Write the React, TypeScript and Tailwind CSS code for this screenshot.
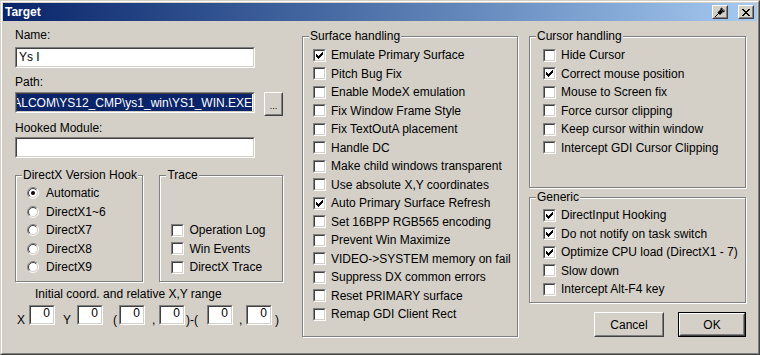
import React from "react";

function Sunken({ className = "", children }: { className?: string; children?: React.ReactNode }) {
  return (
    <div className={"border border-t-[#808080] border-l-[#808080] border-b-white border-r-white " + className}>
      <div className="h-full w-full border border-t-[#404040] border-l-[#404040] border-b-[#d4d0c8] border-r-[#d4d0c8] bg-white overflow-hidden">
        {children}
      </div>
    </div>
  );
}

function Raised({ className = "", children }: { className?: string; children?: React.ReactNode }) {
  return (
    <div className={"border border-t-white border-l-white border-b-[#404040] border-r-[#404040] " + className}>
      <div className="h-full w-full border border-t-[#d4d0c8] border-l-[#d4d0c8] border-b-[#808080] border-r-[#808080] flex items-center justify-center">
        {children}
      </div>
    </div>
  );
}

function CheckBox({ checked }: { checked?: boolean }) {
  return (
    <div className="w-[13px] h-[13px] shrink-0 border border-t-[#808080] border-l-[#808080] border-b-white border-r-white">
      <div className="relative h-full w-full border border-t-[#404040] border-l-[#404040] border-b-[#d4d0c8] border-r-[#d4d0c8] bg-white">
        {checked && (
          <svg width="7" height="7" viewBox="0 0 7 7" className="absolute left-[1px] top-[1px]">
            <path
              d="M0 2h1v3H0z M1 3h1v3H1z M2 4h1v3H2z M3 3h1v3H3z M4 2h1v3H4z M5 1h1v3H5z M6 0h1v3H6z"
              fill="#000"
            />
          </svg>
        )}
      </div>
    </div>
  );
}

function Radio({ checked }: { checked?: boolean }) {
  return (
    <svg width="12" height="12" viewBox="0 0 12 12" className="shrink-0">
      <circle cx="6" cy="6" r="4.5" fill="#fff" />
      <path d="M2.111 9.889 A5.5 5.5 0 0 1 9.889 2.111" stroke="#808080" fill="none" />
      <path d="M9.889 2.111 A5.5 5.5 0 0 1 2.111 9.889" stroke="#ffffff" fill="none" />
      <path d="M2.818 9.182 A4.5 4.5 0 0 1 9.182 2.818" stroke="#404040" fill="none" />
      <path d="M9.182 2.818 A4.5 4.5 0 0 1 2.818 9.182" stroke="#d4d0c8" fill="none" />
      {checked && <circle cx="6" cy="6" r="2" fill="#000" />}
    </svg>
  );
}

function CheckRow({ label, checked }: { label: string; checked?: boolean }) {
  return (
    <div className="flex items-center h-[18.5px]">
      <CheckBox checked={checked} />
      <span className="ml-[5px] leading-[14px] whitespace-nowrap">{label}</span>
    </div>
  );
}

function RadioRow({ label, checked }: { label: string; checked?: boolean }) {
  return (
    <div className="flex items-center h-[18.5px]">
      <Radio checked={checked} />
      <span className="ml-[7px] leading-[14px] whitespace-nowrap">{label}</span>
    </div>
  );
}

function Group({ title, className = "", children }: { title: string; className?: string; children?: React.ReactNode }) {
  return (
    <div className={"relative border border-[#808080] shadow-[inset_1px_1px_0_#fff,1px_1px_0_#fff] " + className}>
      <span className="absolute left-[6px] top-[-8px] bg-[#d4d0c8] px-[1px] leading-[14px] whitespace-nowrap">{title}</span>
      {children}
    </div>
  );
}

function CoordBox() {
  return (
    <Sunken className="w-[26px] h-[20px] self-start">
      <div className="text-right pr-[3px] leading-[13px]">0</div>
    </Sunken>
  );
}

function Lbl({ className = "", children }: { className?: string; children: React.ReactNode }) {
  return <span className={"leading-[14px] self-end whitespace-nowrap " + className}>{children}</span>;
}

export default function App() {
  const surface: [string, boolean][] = [
    ["Emulate Primary Surface", true],
    ["Pitch Bug Fix", false],
    ["Enable ModeX emulation", false],
    ["Fix Window Frame Style", false],
    ["Fix TextOutA placement", false],
    ["Handle DC", false],
    ["Make child windows transparent", false],
    ["Use absolute X,Y coordinates", false],
    ["Auto Primary Surface Refresh", true],
    ["Set 16BPP RGB565 encoding", false],
    ["Prevent Win Maximize", false],
    ["VIDEO->SYSTEM memory on fail", false],
    ["Suppress DX common errors", false],
    ["Reset PRIMARY surface", false],
    ["Remap GDI Client Rect", false],
  ];
  const cursor: [string, boolean][] = [
    ["Hide Cursor", false],
    ["Correct mouse position", true],
    ["Mouse to Screen fix", false],
    ["Force cursor clipping", false],
    ["Keep cursor within window", false],
    ["Intercept GDI Cursor Clipping", false],
  ];
  const generic: [string, boolean][] = [
    ["DirectInput Hooking", true],
    ["Do not notify on task switch", true],
    ["Optimize CPU load (DirectX1 - 7)", true],
    ["Slow down", false],
    ["Intercept Alt-F4 key", false],
  ];

  return (
    <div className="w-[760px] h-[355px] overflow-hidden bg-[#d4d0c8] font-['Liberation_Sans',Arial,sans-serif] text-[12px] text-black border border-t-[#d4d0c8] border-l-[#d4d0c8] border-b-[#404040] border-r-[#404040]">
      <div className="h-full border border-t-white border-l-white border-b-[#808080] border-r-[#808080] p-[1px] flex flex-col">
        {/* Title bar */}
        <div className="h-[18px] shrink-0 flex items-center bg-linear-to-r from-[#0a246a] to-[#a6caf0]">
          <span className="pl-[2px] font-bold text-white leading-[14px]">Target</span>
          <Raised className="ml-auto w-[16px] h-[14px] bg-[#d4d0c8]">
            <svg width="12" height="11" viewBox="0 0 12 11">
              <path d="M1 10 L5 6" stroke="#000" strokeWidth="1" />
              <path d="M3.5 5.5 L6.5 2.5 L9 5 L6 8 Z" fill="#000" />
              <path d="M6 2 L7.5 0.5 L11 4 L9.5 5.5 Z" fill="#000" />
              <path d="M7.6 1.6 L9.9 3.9" stroke="#9a9a9a" strokeWidth="0.8" />
            </svg>
          </Raised>
          <Raised className="ml-[10px] mr-[3px] w-[16px] h-[14px] bg-[#d4d0c8]">
            <svg width="8" height="7" viewBox="0 0 8 7">
              <path
                d="M0 0h2v1H0z M6 0h2v1H6z M1 1h2v1H1z M5 1h2v1H5z M2 2h4v1H2z M3 3h2v1H3z M2 4h4v1H2z M1 5h2v1H1z M5 5h2v1H5z M0 6h2v1H0z M6 6h2v1H6z"
                fill="#000"
              />
            </svg>
          </Raised>
        </div>

        {/* Body */}
        <div className="flex pl-[12px]">
          {/* Left column */}
          <div className="w-[268px] flex flex-col">
            <div className="mt-[7px] leading-[14px]">Name:</div>
            <Sunken className="mt-[5px] w-[240px] h-[21px]">
              <div className="pl-[2px] leading-[17px]">Ys I</div>
            </Sunken>
            <div className="mt-[7px] leading-[14px]">Path:</div>
            <div className="mt-[3px] flex items-start">
              <Sunken className="w-[240px] h-[21px]">
                <div className="h-full flex justify-end overflow-hidden pr-[1px]">
                  <span className="h-full flex items-center bg-[#0a246a] text-white whitespace-nowrap leading-[14px]">
                    {"C:\\Games\\FALCOM\\YS12_CMP\\ys1_win\\YS1_WIN.EXE"}
                  </span>
                </div>
              </Sunken>
              <Raised className="ml-[9px] w-[19px] h-[24px] bg-[#d4d0c8]">
                <span className="text-[9px] leading-[9px] mt-[5px]">...</span>
              </Raised>
            </div>
            <div className="mt-[5px] leading-[14px]">Hooked Module:</div>
            <Sunken className="mt-[2px] w-[240px] h-[21px]" />

            <div className="mt-[17px] flex">
              <Group title="DirectX Version Hook" className="w-[129px] h-[107px]">
                <div className="pt-[8px] pl-[11px]">
                  <RadioRow label="Automatic" checked />
                  <RadioRow label="DirectX1~6" />
                  <RadioRow label="DirectX7" />
                  <RadioRow label="DirectX8" />
                  <RadioRow label="DirectX9" />
                </div>
              </Group>
              <Group title="Trace" className="ml-[16px] w-[124px] h-[107px]">
                <div className="pt-[45px] pl-[11px]">
                  <CheckRow label="Operation Log" />
                  <CheckRow label="Win Events" />
                  <CheckRow label="DirectX Trace" />
                </div>
              </Group>
            </div>

            <div className="mt-[5px] ml-[20px] leading-[14px]">Initial coord. and relative X,Y range</div>
            <div className="mt-[4px] flex h-[22px]">
              <Lbl className="ml-[2px] w-[12px]">X</Lbl>
              <CoordBox />
              <Lbl className="ml-[8px] w-[14px]">Y</Lbl>
              <CoordBox />
              <Lbl className="ml-[10px] w-[6px]">(</Lbl>
              <CoordBox />
              <Lbl className="ml-[7px] w-[7px]">,</Lbl>
              <CoordBox />
              <Lbl className="ml-[1px] w-[21px]">)-(</Lbl>
              <CoordBox />
              <Lbl className="ml-[6px] w-[7px]">,</Lbl>
              <CoordBox />
              <Lbl className="ml-[3px]">)</Lbl>
            </div>
          </div>

          {/* Middle column */}
          <Group title="Surface handling" className="mt-[15px] ml-[19px] w-[216px] h-[301px]">
            <div className="pt-[9px] pl-[10px]">
              {surface.map(([l, c]) => (
                <CheckRow key={l} label={l} checked={c} />
              ))}
            </div>
          </Group>

          {/* Right column */}
          <div className="ml-[11px] w-[217px] flex flex-col">
            <Group title="Cursor handling" className="mt-[15px] h-[152px]">
              <div className="pt-[9px] pl-[13px]">
                {cursor.map(([l, c]) => (
                  <CheckRow key={l} label={l} checked={c} />
                ))}
              </div>
            </Group>
            <Group title="Generic" className="mt-[9px] h-[106px]">
              <div className="pt-[8px] pl-[13px]">
                {generic.map(([l, c]) => (
                  <CheckRow key={l} label={l} checked={c} />
                ))}
              </div>
            </Group>
            <div className="mt-[9px] flex">
              <Raised className="ml-[65px] w-[70px] h-[25px]">
                <span className="leading-[14px]">Cancel</span>
              </Raised>
              <div className="ml-[14px] w-[68px] h-[25px] border border-black">
                <Raised className="w-full h-full">
                  <span className="leading-[14px]">OK</span>
                </Raised>
              </div>
            </div>
          </div>
        </div>
      </div>
    </div>
  );
}
